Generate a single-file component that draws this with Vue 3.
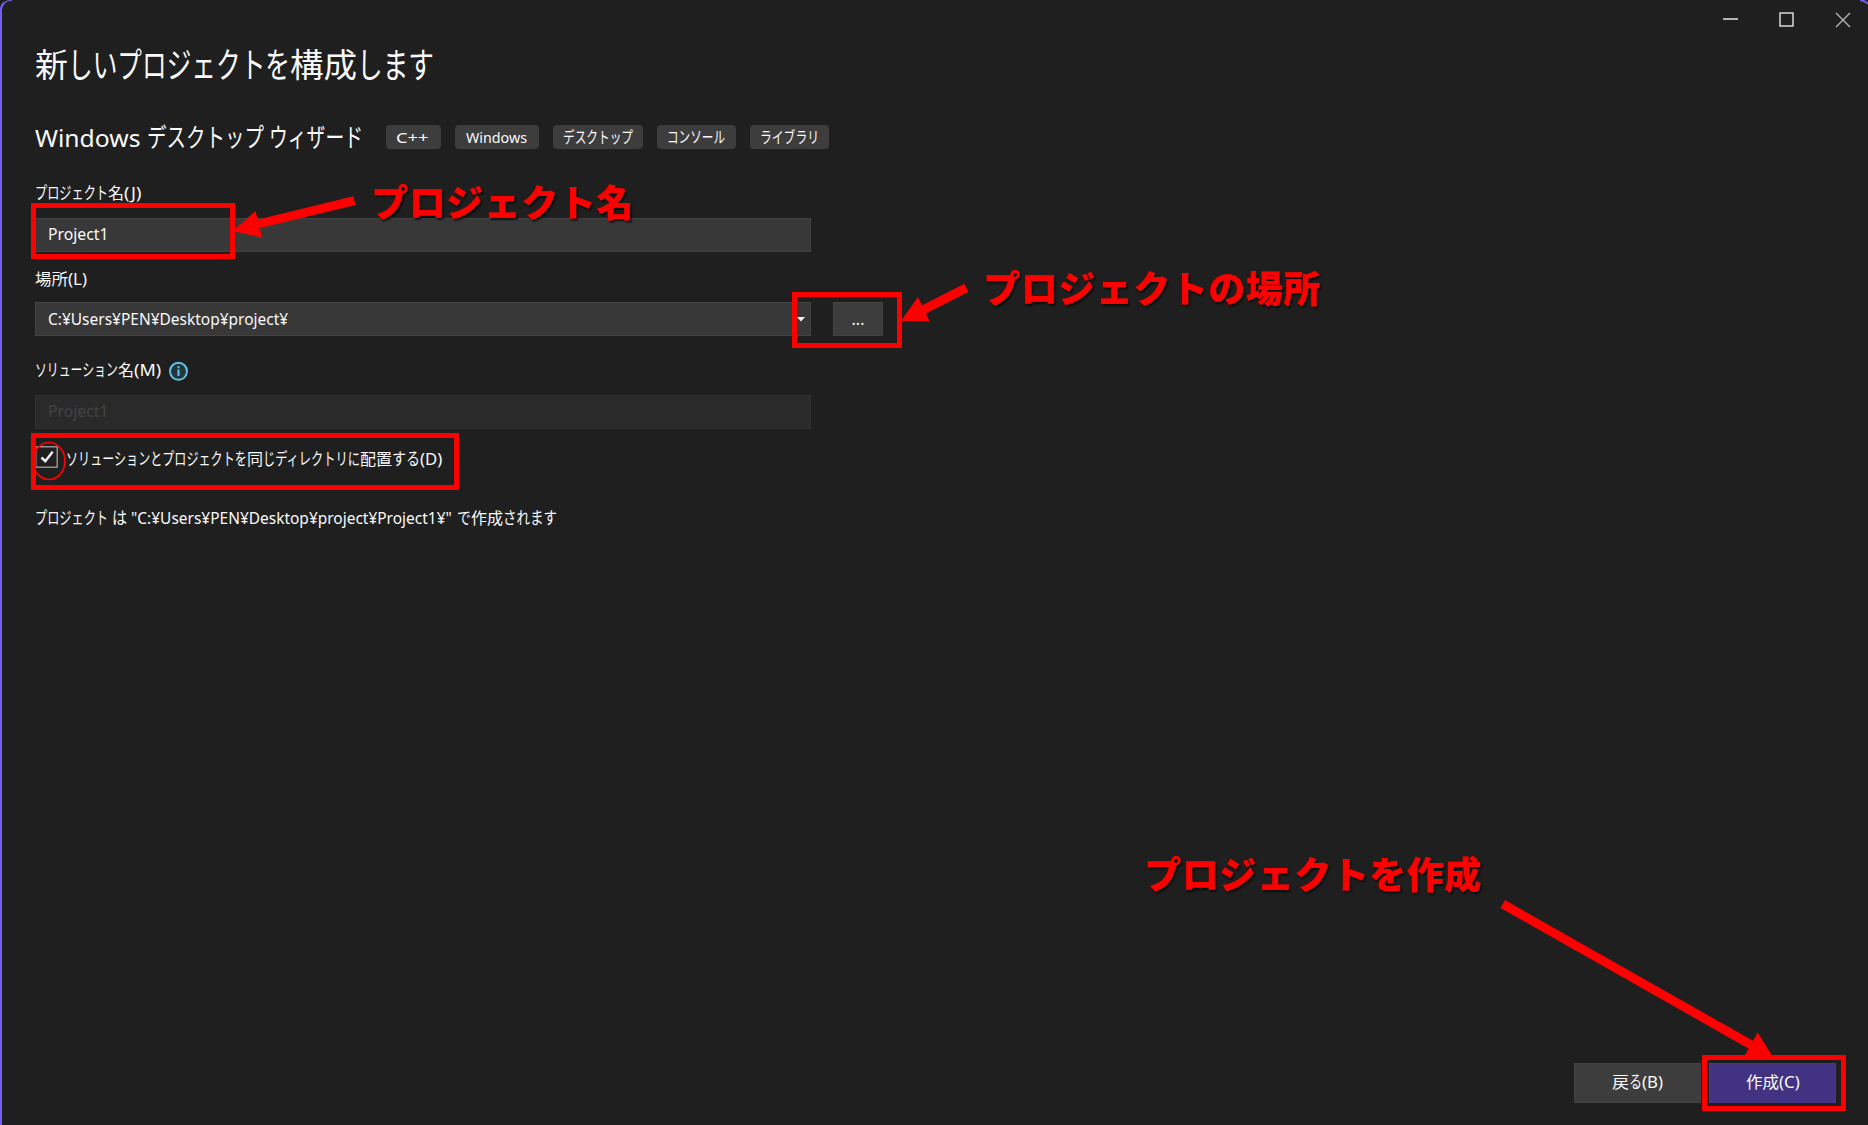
<script setup>
// Every text line is a list of runs: [text, width, gap before].
const vFit = {
  mounted(el, { value }) {
    const inner = el.firstElementChild
    const tall = /^[\u3040-\u30ff]+$/.test(inner.textContent) ? 1.07 : 1
    const apply = () => {
      inner.style.transform = 'none'
      inner.style.transform = `scale(${value / inner.offsetWidth}, ${tall})`
    }
    apply()
    document.fonts.ready.then(apply)
  }
}

const title = [['新', 33], ['しいプロジェクトを', 222], ['構成', 67], ['します', 77]]
const subtitle = [['Windows', 106], ['デスクトップ', 117, 6], ['ウィザード', 94, 5]]
const tags = [
  { w: 55, pad: 10, runs: [['C++', 33]] },
  { w: 84, pad: 11, runs: [['Windows', 61]] },
  { w: 90, pad: 10, runs: [['デスクトップ', 70]] },
  { w: 79, pad: 10, runs: [['コンソール', 58]] },
  { w: 79, pad: 10, runs: [['ライブラリ', 59]] }
]
const nameLabel = [['プロジェクト', 73], ['名', 16], ['(J)', 17]]
const placeLabel = [['場所', 33], ['(L)', 19]]
const solutionLabel = [['ソリューション', 83], ['名', 16], ['(M)', 27]]
const projectName = [['Project1', 60]]
const path = [['C:¥Users¥PEN¥Desktop¥project¥', 240]]
const checkLabel = [
  ['ソリューションとプロジェクトを', 181], ['同', 16], ['じディレクトリに', 97],
  ['配置', 32], ['する', 28], ['(D)', 22]
]
const summary = [
  ['プロジェクト', 73], ['は', 15, 4], ['"C:¥Users¥PEN¥Desktop¥project¥Project1¥"', 321, 4],
  ['で', 14, 5], ['作成', 32], ['されます', 54]
]
const back = [['戻', 17], ['る', 13], ['(B)', 21]]
const create = [['作成', 33], ['(C)', 21]]
</script>

<template>
  <div class="window">
    <div class="frame"></div>
    <svg class="corner" width="8" height="5" viewBox="0 0 8 5"><path d="M0 0Q5 0.5 8 4" fill="none" stroke="#6f60ee" stroke-width="1.8" /></svg>
    <div class="caption">
      <svg width="128" height="16" viewBox="0 0 128 16" fill="none">
        <path d="M0 7H15" stroke="#b5b5b5" stroke-width="2" />
        <rect x="57" y="1" width="13" height="13" stroke="#d8d8d8" stroke-width="1.5" />
        <path d="M113 1L127 15M127 1L113 15" stroke="#b5b5b5" stroke-width="1.4" />
      </svg>
    </div>

    <main class="content">
      <h1 class="line title">
        <span v-for="(r, i) in title" :key="i" v-fit="r[1]" class="run" :style="{ width: r[1] + 'px' }"><span>{{ r[0] }}</span></span>
      </h1>
      <div class="heading">
        <h2 class="line subtitle">
          <span v-for="(r, i) in subtitle" :key="i" v-fit="r[1]" class="run" :style="{ width: r[1] + 'px', marginLeft: (r[2] || 0) + 'px' }"><span>{{ r[0] }}</span></span>
        </h2>
        <div class="tags">
          <div v-for="(t, k) in tags" :key="k" class="line tag" :style="{ width: t.w + 'px', paddingLeft: t.pad + 'px' }">
            <span v-for="(r, i) in t.runs" :key="i" v-fit="r[1]" class="run" :style="{ width: r[1] + 'px' }"><span>{{ r[0] }}</span></span>
          </div>
        </div>
      </div>

      <label class="line label">
        <span v-for="(r, i) in nameLabel" :key="i" v-fit="r[1]" class="run" :style="{ width: r[1] + 'px' }"><span>{{ r[0] }}</span></span>
      </label>
      <div class="line field">
        <span v-for="(r, i) in projectName" :key="i" v-fit="r[1]" class="run" :style="{ width: r[1] + 'px' }"><span>{{ r[0] }}</span></span>
      </div>

      <label class="line label place">
        <span v-for="(r, i) in placeLabel" :key="i" v-fit="r[1]" class="run" :style="{ width: r[1] + 'px' }"><span>{{ r[0] }}</span></span>
      </label>
      <div class="row">
        <div class="line field combo">
          <span v-for="(r, i) in path" :key="i" v-fit="r[1]" class="run" :style="{ width: r[1] + 'px' }"><span>{{ r[0] }}</span></span>
          <svg class="drop" width="8" height="5" viewBox="0 0 8 5"><path d="M0 0H8L4 4.6Z" fill="#f0f0f0" /></svg>
        </div>
        <div class="browse">...</div>
      </div>

      <label class="line label solution">
        <span v-for="(r, i) in solutionLabel" :key="i" v-fit="r[1]" class="run" :style="{ width: r[1] + 'px' }"><span>{{ r[0] }}</span></span>
        <svg class="info" width="20" height="20" viewBox="0 0 20 20">
          <circle cx="10.5" cy="10.3" r="8.5" fill="#24353c" stroke="#62c4ea" stroke-width="1.9" />
          <path d="M9.5 5.3H11.5V7.3H9.5ZM9.5 8.6H11.5V15H9.5Z" fill="#62c4ea" />
        </svg>
      </label>
      <div class="line field disabled">
        <span v-for="(r, i) in projectName" :key="i" v-fit="r[1]" class="run" :style="{ width: r[1] + 'px' }"><span>{{ r[0] }}</span></span>
      </div>

      <div class="check">
        <svg width="23" height="22" viewBox="0 0 23 22" fill="none">
          <rect x="0.8" y="0.8" width="21.4" height="20.4" stroke="#a3a3a3" stroke-width="1.3" />
          <path d="M6.5 11.5L10.3 15.2L17.7 5.8" stroke="#f2f2f2" stroke-width="2.5" />
        </svg>
        <span class="line check-text">
          <span v-for="(r, i) in checkLabel" :key="i" v-fit="r[1]" class="run" :style="{ width: r[1] + 'px' }"><span>{{ r[0] }}</span></span>
        </span>
      </div>

      <p class="line summary">
        <span v-for="(r, i) in summary" :key="i" v-fit="r[1]" class="run" :style="{ width: r[1] + 'px', marginLeft: (r[2] || 0) + 'px' }"><span>{{ r[0] }}</span></span>
      </p>
    </main>

    <footer class="actions">
      <div class="line button">
        <span v-for="(r, i) in back" :key="i" v-fit="r[1]" class="run" :style="{ width: r[1] + 'px' }"><span>{{ r[0] }}</span></span>
      </div>
      <div class="line button primary">
        <span v-for="(r, i) in create" :key="i" v-fit="r[1]" class="run" :style="{ width: r[1] + 'px' }"><span>{{ r[0] }}</span></span>
      </div>
    </footer>

    <svg class="marks" width="1868" height="1125" viewBox="0 0 1868 1125">
      <g fill="none" stroke="#ff0000" stroke-width="5">
        <rect x="33.5" y="205.5" width="199" height="51" />
        <rect x="794.5" y="294.5" width="105" height="51" />
        <rect x="33.5" y="435.5" width="423" height="52" />
        <rect x="1704.5" y="1057.5" width="139" height="51" />
        <ellipse cx="49" cy="461" rx="16" ry="18.5" stroke-width="1.7" />
      </g>
      <g stroke="#ff0000" stroke-width="9">
        <path d="M354.5 200.7L256 224.5M966.4 287.7L920 311.5M1502.7 904L1754 1046.5" />
      </g>
      <g fill="#ff0000">
        <path d="M233 231L255.5 211L262 237.5ZM901 321L918 297L929.5 321ZM1757.7 1032.5L1773 1057H1744Z" />
      </g>
    </svg>
    <div class="note note-name">プロジェクト名</div>
    <div class="note note-place">プロジェクトの場所</div>
    <div class="note note-create">プロジェクトを作成</div>
  </div>
</template>

<style>
body { background: #1f1f1f; overflow: hidden; }
</style>

<style scoped>
.window {
  position: relative;
  box-sizing: border-box;
  width: 1868px;
  height: 1125px;
  display: flex;
  flex-direction: column;
  overflow: hidden;
  background: #1f1f1f;
  color: #fafafa;
  font: 16px "Noto Sans", "Noto Sans CJK JP", sans-serif;
}
.frame {
  position: absolute;
  left: 0;
  top: -1px;
  width: 1867px;
  height: 1150px;
  border: 2px solid #6f60ee;
  border-top-color: transparent;
  border-right-color: transparent;
  border-radius: 11px;
  pointer-events: none;
}
.corner { position: absolute; right: 0; top: 0; }
.frame::before {
  content: "";
  position: absolute;
  left: -2px;
  top: -1px;
  width: 10px;
  height: 10px;
  border-left: 2px solid #6f60ee;
  border-top: 1.5px solid #6f60ee;
  border-top-left-radius: 10px;
}
.caption {
  display: flex;
  justify-content: flex-end;
  height: 31px;
  padding: 12px 17px 0 0;
}
.line { display: flex; align-items: flex-start; margin: 0; font-weight: 400; white-space: pre; line-height: 20px; }
.run { flex: none; display: block; }
.run > span { display: inline-block; transform-origin: 0 60%; }
.content { flex: 1; display: flex; flex-direction: column; align-items: flex-start; padding-left: 35px; }
.title { height: 44px; line-height: 44px; font-size: 33px; }
.heading { display: flex; margin-top: 34px; height: 34px; }
.subtitle { width: 351px; font-size: 24px; line-height: 34px; }
.tags { display: flex; gap: 14px; padding-top: 4px; }
.tag { box-sizing: border-box; height: 24px; border-radius: 4px; background: #3d3d3d; font-size: 15px; line-height: 25px; }
.label { height: 20px; margin-top: 28px; }
.field {
  box-sizing: border-box;
  width: 776px;
  height: 34px;
  margin-top: 15px;
  padding-left: 12px;
  border: 1px solid #434343;
  background: #383838;
  line-height: 31px;
}
.place { margin-top: 17px; }
.row { display: flex; gap: 22px; margin-top: 13px; }
.combo { margin-top: 0; line-height: 33px; }
.drop { margin: 14px 5px 0 auto; }
.browse {
  box-sizing: border-box;
  width: 50px;
  height: 34px;
  border: 1px solid #434343;
  background: #3d3d3d;
  text-align: center;
  line-height: 32px;
}
.solution { margin-top: 24px; }
.info { margin: 1px 0 0 7px; }
.disabled { margin-top: 15px; border-color: #303030; background: #2a2a2a; color: #434343; }
.check { display: flex; height: 22px; margin-top: 17px; gap: 8px; }
.check-text { margin-top: 3px; }
.summary { margin-top: 40px; }
.actions { display: flex; justify-content: flex-end; gap: 8px; height: 62px; padding-right: 32px; }
.button { box-sizing: border-box; width: 127px; height: 40px; justify-content: center; border: 1px solid #434343; background: #3d3d3d; line-height: 37px; }
.primary { border-color: #463a88; background: #413382; }
.marks { position: absolute; left: 0; top: 0; }
.note {
  position: absolute;
  color: #ff0000;
  font: 900 37px/44px "Noto Sans CJK JP", sans-serif;
  letter-spacing: 0.5px;
  text-shadow: 2px 2px 2px rgba(0, 0, 0, 0.7);
  white-space: nowrap;
}
.note-name { left: 371px; top: 179px; }
.note-place { left: 983px; top: 265px; }
.note-create { left: 1144px; top: 851px; }
</style>
